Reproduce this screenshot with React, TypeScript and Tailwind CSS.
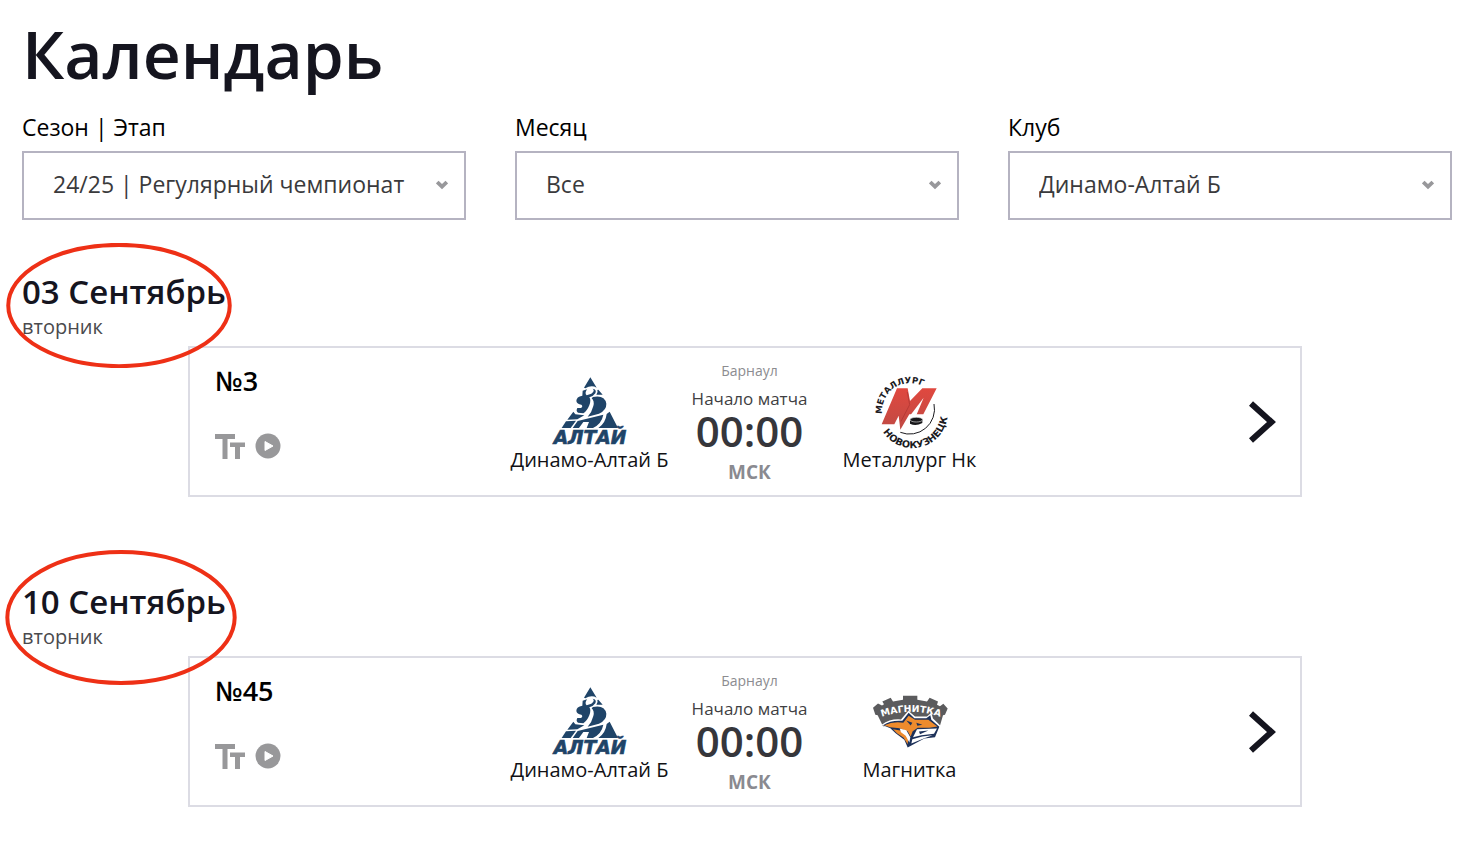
import { useId } from "react"

type Club = "altai" | "metallurg" | "magnitka"

const clubNames: Record<Club, string> = {
  altai: "Динамо-Алтай Б",
  metallurg: "Металлург Нк",
  magnitka: "Магнитка",
}

const filters = [
  { label: "Сезон | Этап", options: ["24/25 | Регулярный чемпионат", "24/25 | Плей-офф"] },
  { label: "Месяц", options: ["Все", "Сентябрь", "Октябрь"] },
  { label: "Клуб", options: ["Динамо-Алтай Б", "Металлург Нк", "Магнитка"] },
]

const days: { date: string; weekday: string; number: number; home: Club; away: Club; mark: string }[] = [
  {
    date: "03 Сентябрь",
    weekday: "вторник",
    number: 3,
    home: "altai",
    away: "metallurg",
    mark: "-top-[29px] -left-4 h-[125px] w-[226px]",
  },
  {
    date: "10 Сентябрь",
    weekday: "вторник",
    number: 45,
    home: "altai",
    away: "magnitka",
    mark: "-top-8 -left-[17px] h-[135px] w-[232px]",
  },
]

function AltaiLogo() {
  return (
    <svg viewBox="30 20 234 210" className="h-[70px] w-[78px] overflow-visible" aria-hidden="true">
      <g fill="#1f4468">
        <path d="M148 24 L167 55 Q151 46 133 57 L129 55 Z" />
        <path d="M172 61 L185 76 L166 76 Q172 69 169 62 Z" />
        <path d="M125 64 L138 60 Q130 72 137 78 L151 73 Q163 64 155 58 Q168 60 163 72 Q158 80 145 84 Q151 92 145 108 Q138 125 127 132 L111 130 Q104 125 109 116 L120 116 Q127 111 121 106 Q108 105 106 95 Q106 82 124 79 Z" />
        <path d="M156 83 Q191 76 196 103 Q197 122 174 133 L140 142 Q153 128 157 110 Q161 95 152 87 Z" />
        <path d="M97 127 L103 135 L130 138 L109 150 L79 151 Z" />
        <path d="M75 156 L105 154 L89 176 L62 176 Z" />
        <path d="M110 155 L187 136 Q182 163 156 176 L137 176 L144 158 L127 158 L114 176 L95 176 Z" />
        <path d="M206 127 L231 176 L172 176 Q194 161 197 134 Z" />
      </g>
      <text
        x="147"
        y="223"
        textAnchor="middle"
        fontSize="56"
        fontStyle="italic"
        fontWeight="700"
        fill="#1f4468"
        stroke="#1f4468"
        strokeWidth="2"
        className="font-['DejaVu_Sans',sans-serif]"
      >
        АЛТАЙ
      </text>
    </svg>
  )
}

function MetallurgLogo() {
  const id = useId()
  return (
    <svg viewBox="30 18 234 222" className="h-[74px] w-[78px] overflow-visible" aria-hidden="true">
      <defs>
        <path id={`${id}-top`} d="M63 138 A85 85 0 0 1 216 80" />
        <path id={`${id}-bottom`} d="M66 192 A104 104 0 0 0 243 78" />
        <linearGradient id={`${id}-red`} x1="0" y1="0" x2="0" y2="1">
          <stop offset="0" stopColor="#e0483f" />
          <stop offset="1" stopColor="#c04a44" />
        </linearGradient>
      </defs>
      <path
        fill={`url(#${id}-red)`}
        d="M108 61 H140 L147 99 L184 61 H227 L187 139 H145 L118 185 L113 143 L100 169 H62 Z"
      />
      <path d="M147 143 L188 89 L166 142 Z" fill="#fff" />
      <path d="M139 72 L146 110 L120 160" fill="none" stroke="#b83a36" strokeWidth="3" />
      <path d="M219 108 A75 75 0 0 1 118 193" fill="none" stroke="#1b1b1f" strokeWidth="3" />
      <path d="M147 157 V167 Q164 176 184 165 V155 Z" fill="#17171a" />
      <ellipse cx="166" cy="155" rx="19" ry="7" fill="#17171a" stroke="#ddd" strokeWidth="2" />
      <g fontWeight="700" fill="#1b1b1f" className="font-['DejaVu_Sans',sans-serif]">
        <text fontSize="26">
          <textPath href={`#${id}-top`}>МЕТАЛЛУРГ</textPath>
        </text>
        <text fontSize="29">
          <textPath href={`#${id}-bottom`}>НОВОКУЗНЕЦК</textPath>
        </text>
      </g>
    </svg>
  )
}

function MagnitkaLogo() {
  const id = useId()
  return (
    <svg viewBox="30 20 234 170" className="h-[57px] w-[78px] overflow-visible" aria-hidden="true">
      <defs>
        <path id={`${id}-arc`} d="M52 98 Q150 60 248 98" />
      </defs>
      <path
        fill="#5b5b5d"
        d="M36 67 L51 54 L63 60 L69 56 L64 48 L89 37 L96 48 L126 43 V31 L169 31 V43 L198 48 L206 37 L231 48 L228 58 L237 62 L247 55 L260 69 L252 88 L246 89 L236 124 L66 122 L50 89 L43 88 Z"
      />
      <path
        fill="#fff"
        d="M62 118 Q88 99 120 102 L142 76 L162 93 L198 93 L211 82 L216 99 L240 122 L226 159 L192 164 L137 192 L124 163 L98 147 L84 130 Z"
      />
      <path
        fill="#1d3159"
        d="M66 119 Q91 103 124 106 L143 82 L160 98 L196 98 L208 89 L211 103 L235 124 L222 155 L190 159 L140 186 L130 163 L104 143 L88 128 Z"
      />
      <path
        fill="#ee8b2d"
        d="M70 119 Q98 107 127 112 L143 91 L162 103 L202 103 L229 123 L205 127 L170 127 L155 137 L149 153 L140 137 L116 128 L87 125 Z"
      />
      <path fill="#ee8b2d" d="M96 131 L122 136 L142 155 L140 176 L128 157 L108 143 Z" />
      <path fill="#fff" d="M116 129 L136 134 L148 155 L145 171 L134 151 L120 140 Z" />
      <path fill="#fff" d="M168 131 L228 129 L219 145 L181 149 L156 155 Z" />
      <path fill="#fff" d="M154 161 L184 153 L215 149 L190 158 L151 174 Z" />
      <path fill="#1d3159" d="M136 105 L154 112 L149 120 Z M166 112 L184 118 L169 121 Z M174 138 L202 135 L177 146 Z" />
      <text fontSize="28" fontWeight="700" fill="#fff" className="font-['DejaVu_Sans',sans-serif]">
        <textPath href={`#${id}-arc`} startOffset="50%" textAnchor="middle">
          МАГНИТКА
        </textPath>
      </text>
    </svg>
  )
}

const logos = { altai: AltaiLogo, metallurg: MetallurgLogo, magnitka: MagnitkaLogo }

function Filter({ label, options }: { label: string; options: string[] }) {
  const id = useId()
  return (
    <div className="min-w-0">
      <label htmlFor={id} className="mb-2 block text-[23px] leading-8 text-black">
        {label}
      </label>
      <div className="relative">
        <select
          id={id}
          className="block h-[69px] w-full appearance-none border-2 border-[#b5b3c1] bg-white pr-12 pb-[2px] pl-[29px] text-[23px] text-[#3a3a3c]"
        >
          {options.map((option) => (
            <option key={option}>{option}</option>
          ))}
        </select>
        <svg
          viewBox="0 0 12 10"
          className="pointer-events-none absolute top-[29px] right-[18px] h-[10px] w-3"
          aria-hidden="true"
        >
          <path d="M1.2 2 L6 6.6 L10.8 2" fill="none" stroke="#98989b" strokeWidth="3.8" />
        </svg>
      </div>
    </div>
  )
}

function Team({ club }: { club: Club }) {
  const Logo = logos[club]
  return (
    <div className="flex flex-col items-center pt-[25px]">
      <div className="flex h-[75px] items-center">
        <Logo />
      </div>
      <p className="text-[20px] leading-6 whitespace-nowrap text-[#111115]">{clubNames[club]}</p>
    </div>
  )
}

function Match({ number, home, away }: { number: number; home: Club; away: Club }) {
  return (
    <article className="mt-[5px] mr-[150px] ml-[166px] grid h-[151px] grid-cols-[1fr_160px_160px_160px_1fr] border-2 border-[#dcdce4] pr-4 pl-[25px]">
      <div className="pt-[17px]">
        <h3 className="text-[27px] leading-8 font-semibold text-black">№{number}</h3>
        <div className="mt-9 flex gap-[10px]">
          <button type="button" aria-label="Текстовая трансляция">
            <svg viewBox="0 0 30 26" className="h-[26px] w-[30px]" fill="#98989a">
              <path d="M0 1 H20 V6 H12.5 V26 H7.5 V6 H0 Z" />
              <path d="M15 9.5 H30 V14 H25 V26 H20 V14 H15 Z" />
            </svg>
          </button>
          <button type="button" aria-label="Видео">
            <svg viewBox="0 0 26 26" className="size-[26px]">
              <circle cx="13" cy="13" r="12.5" fill="#98989a" />
              <path d="M10 8.5 L18 13 L10 17.5 Z" fill="#fff" stroke="#fff" strokeLinejoin="round" />
            </svg>
          </button>
        </div>
      </div>

      <Team club={home} />

      <div className="pt-[14px] text-center whitespace-nowrap">
        <p className="text-[14px] leading-[18px] text-[#8c8c90]">Барнаул</p>
        <p className="mt-[7px] text-[17px] leading-6 text-[#3f3f43]">Начало матча</p>
        <p className="text-[42px] leading-10 font-semibold text-[#36363b]">00:00</p>
        <p className="mt-[9px] text-[19px] leading-6 font-bold text-[#8a8a90]">МСК</p>
      </div>

      <Team club={away} />

      <a href="#match" aria-label="Подробнее о матче" className="mr-2 self-center justify-self-end">
        <svg viewBox="0 0 27 42" className="h-[42px] w-[27px]">
          <path d="M2 2.5 L22.5 21 L2 39.5" fill="none" stroke="#15151f" strokeWidth="6" />
        </svg>
      </a>
    </article>
  )
}

export default function App() {
  return (
    <main className="min-h-screen bg-white pt-[13px] pr-2 pb-14 pl-[22px] font-['Open_Sans','Noto_Sans',sans-serif]">
      <h1 className="text-[66px] leading-[80px] font-semibold text-[#15151f]">Календарь</h1>

      <form className="mt-[18px] grid grid-cols-3 gap-[49px]">
        {filters.map((filter) => (
          <Filter key={filter.label} {...filter} />
        ))}
      </form>

      <div className="mt-[52px] flex flex-col gap-[85px]">
        {days.map((day) => (
          <section key={day.date}>
            <header className="relative">
              <h2 className="text-[33px] leading-10 font-semibold text-[#15151f]">{day.date}</h2>
              <p className="pt-px text-[20px] leading-7 text-[#4a4a4d]">{day.weekday}</p>
              {/* Hand-drawn marker ring around the date */}
              <svg className={`pointer-events-none absolute ${day.mark}`} aria-hidden="true">
                <ellipse cx="50%" cy="50%" rx="49%" ry="48.5%" fill="none" stroke="#ee3016" strokeWidth="4" />
              </svg>
            </header>
            <Match number={day.number} home={day.home} away={day.away} />
          </section>
        ))}
      </div>
    </main>
  )
}
